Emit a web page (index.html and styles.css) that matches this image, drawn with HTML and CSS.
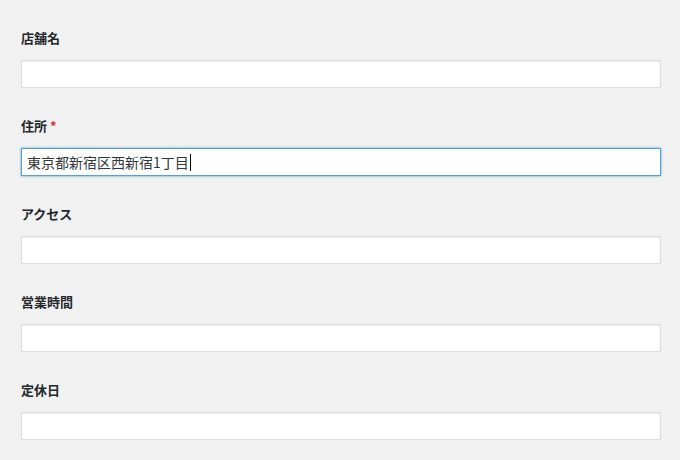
FILE: index.html
```html
<!DOCTYPE html>
<html lang="ja">
<head>
<meta charset="utf-8">
<title>店舗情報</title>
<link rel="stylesheet" href="styles.css">
</head>
<body>
<form class="form">
  <div class="field">
    <label class="label" for="f-name">店舗名</label>
    <input class="input" id="f-name" type="text">
  </div>
  <div class="field">
    <label class="label">住所 <span class="req">*</span></label>
    <div class="input input-focus" role="textbox"><span class="value">東京都新宿区西新宿1丁目</span><span class="caret"></span></div>
  </div>
  <div class="field">
    <label class="label" for="f-access">アクセス</label>
    <input class="input" id="f-access" type="text">
  </div>
  <div class="field">
    <label class="label" for="f-hours">営業時間</label>
    <input class="input" id="f-hours" type="text">
  </div>
  <div class="field">
    <label class="label" for="f-holiday">定休日</label>
    <input class="input" id="f-holiday" type="text">
  </div>
</form>
</body>
</html>
```
FILE: styles.css
```css
html, body {
  margin: 0;
  padding: 0;
  background: #f1f1f1;
}
body {
  font-family: "Noto Sans CJK JP", "Noto Sans", sans-serif;
  color: #23282d;
}
.form {
  display: flex;
  flex-direction: column;
  gap: 28px;
  padding: 28px 19px 0 21px;
}
.field {
  display: flex;
  flex-direction: column;
  gap: 12px;
}
.label {
  font-size: 13px;
  font-weight: 700;
  line-height: 20px;
  height: 20px;
  color: #23282d;
}
.req {
  color: #dc3232;
}
.input {
  box-sizing: border-box;
  width: 640px;
  height: 28px;
  margin: 0;
  padding: 0 5px;
  border: 1px solid #dddddd;
  background: #ffffff;
  box-shadow: inset 0 1px 2px rgba(0, 0, 0, 0.07);
  font-family: "Noto Sans CJK JP", "Noto Sans", sans-serif;
  font-size: 14px;
  color: #32373c;
  outline: none;
}
.input-focus {
  display: flex;
  align-items: center;
  border-color: #5b9dd9;
  box-shadow: 0 0 2px rgba(30, 140, 190, 0.8);
  line-height: 18px;
}
.caret {
  display: inline-block;
  width: 1px;
  height: 17px;
  margin-left: 1px;
  background: #000;
}
```
